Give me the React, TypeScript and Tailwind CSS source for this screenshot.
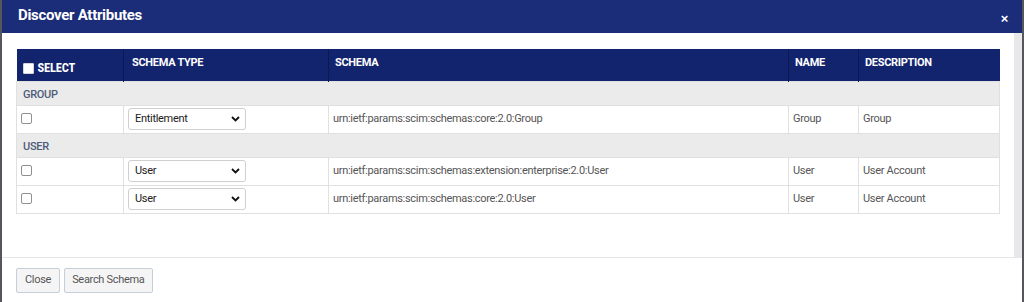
import React from "react";

const rows = [
  { group: "GROUP" },
  {
    type: "Entitlement",
    schema: "urn:ietf:params:scim:schemas:core:2.0:Group",
    name: "Group",
    description: "Group",
  },
  { group: "USER" },
  {
    type: "User",
    schema: "urn:ietf:params:scim:schemas:extension:enterprise:2.0:User",
    name: "User",
    description: "User Account",
  },
  {
    type: "User",
    schema: "urn:ietf:params:scim:schemas:core:2.0:User",
    name: "User",
    description: "User Account",
  },
];

function Checkbox({ light }: { light?: boolean }) {
  return (
    <span
      className={
        light
          ? "inline-block w-[11px] h-[11px] bg-white border border-[#d6d6d6] rounded-[1px]"
          : "inline-block w-[11px] h-[11px] bg-white border border-[#8f8f8f] rounded-[2px]"
      }
    />
  );
}

function FakeSelect({ value }: { value: string }) {
  return (
    <div className="w-[118px] h-[22px] border border-[#cfcfcf] rounded-[3px] bg-white flex items-center justify-between pl-[6px] pr-[5px] text-[11px] text-[#222]">
      <span>{value}</span>
      <svg width="9" height="6" viewBox="0 0 9 6">
        <path d="M1 1l3.5 3.5L8 1" fill="none" stroke="#111" strokeWidth="1.8" />
      </svg>
    </div>
  );
}

export default function App() {
  return (
    <div className="w-[1024px] h-[302px] bg-[#56565c] flex px-[2px] font-['Roboto',sans-serif] tracking-[-0.3px]">
      <div className="flex-1 bg-white flex flex-col">
        {/* Header */}
        <div className="h-[33px] bg-[#1b2c78] flex items-center justify-between pl-[16px] pr-[14px]">
          <span className="text-white font-bold text-[15px] tracking-[-0.3px] -mt-[2px]">
            Discover Attributes
          </span>
          <span className="text-white font-bold text-[13px] mt-[4px] font-['Liberation_Sans',Arial,sans-serif]">
            ×
          </span>
        </div>

        {/* Body */}
        <div className="h-[224px] flex">
          <div className="flex-1 pt-[16px] pl-[14px]">
            <table className="border-collapse text-[11px] text-[#555] table-fixed w-[983px]">
              <colgroup>
                <col className="w-[107px]" />
                <col className="w-[205px]" />
                <col className="w-[460px]" />
                <col className="w-[70px]" />
                <col className="w-[141px]" />
              </colgroup>
              <thead>
                <tr className="h-[32px] bg-[#13246e] text-white text-left font-bold text-[11px]">
                  <th className="border-r border-[#0b1852] pl-[6px] pt-[8px] align-middle">
                    <div className="flex items-center gap-[4px] text-[12.5px] font-['Liberation_Sans_Narrow','Roboto_Condensed','Liberation_Sans',sans-serif] tracking-[-0.2px]">
                      <Checkbox light />
                      SELECT
                    </div>
                  </th>
                  <th className="border-r border-[#0b1852] pl-[8px] pt-[6px] align-top">SCHEMA TYPE</th>
                  <th className="border-r border-[#0b1852] pl-[6px] pt-[6px] align-top">SCHEMA</th>
                  <th className="border-r border-[#0b1852] pl-[6px] pt-[6px] align-top">NAME</th>
                  <th className="pl-[6px] pt-[6px] align-top">DESCRIPTION</th>
                </tr>
              </thead>
              <tbody>
                {rows.map((row, i) =>
                  row.group ? (
                    <tr key={i} className="h-[24px] bg-[#ebebeb] border border-[#e0e0e0]">
                      <td colSpan={5} className="pl-[6px] pt-[5px] text-[#4d5b78] font-medium">
                        {row.group}
                      </td>
                    </tr>
                  ) : (
                    <tr key={i} className="h-[28px]">
                      <td className="border border-[#e0e0e0] pl-[4px] align-middle">
                        <div className="flex items-center -mt-[2px]">
                          <Checkbox />
                        </div>
                      </td>
                      <td className="border border-[#e0e0e0] pl-[4px]">
                        <FakeSelect value={row.type!} />
                      </td>
                      <td className="border border-[#e0e0e0] pl-[4px]">{row.schema}</td>
                      <td className="border border-[#e0e0e0] pl-[4px]">{row.name}</td>
                      <td className="border border-[#e0e0e0] pl-[4px]">{row.description}</td>
                    </tr>
                  )
                )}
              </tbody>
            </table>
          </div>
          <div className="w-[8px] bg-[#e8e8e8]" />
        </div>

        {/* Footer */}
        <div className="flex-1 border-t border-[#e6e6e6] pt-[10px] pl-[14px] flex items-start gap-[4px]">
          <button className="h-[25px] px-[8px] border border-[#c5cedb] rounded-[2px] bg-[#f5f5f5] text-[11px] text-[#555]">
            Close
          </button>
          <button className="h-[25px] px-[7px] border border-[#c5cedb] rounded-[2px] bg-[#f5f5f5] text-[11px] text-[#555]">
            Search Schema
          </button>
        </div>
      </div>
    </div>
  );
}
